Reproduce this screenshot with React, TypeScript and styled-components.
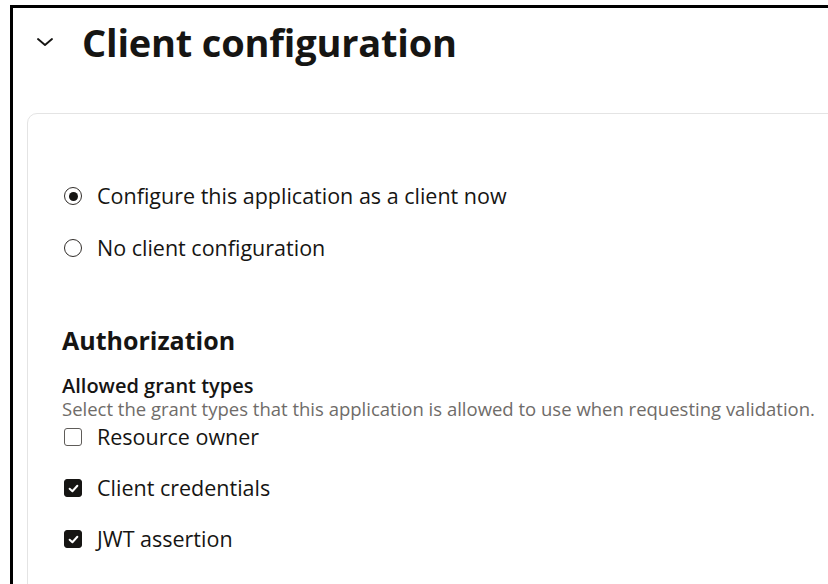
import styled, { createGlobalStyle } from "styled-components";

const GlobalStyle = createGlobalStyle`
  html, body {
    margin: 0;
    padding: 0;
    background: #ffffff;
    font-family: "Open Sans", "Noto Sans", Arial, sans-serif;
    color: #161513;
  }
`;

const Page = styled.div`
  width: 828px;
  height: 584px;
  overflow: hidden;
  padding: 5px 0 0 10px;
  box-sizing: border-box;
`;

const Frame = styled.section`
  border-top: 3px solid #000000;
  border-left: 3px solid #000000;
  width: 900px;
  height: 700px;
  box-sizing: border-box;
`;

const Header = styled.div`
  display: flex;
  align-items: center;
  height: 67px;
  padding-left: 23px;
  gap: 28px;
`;

const Chevron = styled.svg`
  width: 18px;
  height: 18px;
  flex: none;
`;

const Title = styled.h2`
  margin: 0;
  font-size: 38px;
  line-height: 50px;
  font-weight: 700;
  color: #161513;
  letter-spacing: -0.2px;
`;

const Card = styled.div`
  margin: 38px 0 0 14px;
  border: 1px solid #e4e4e4;
  border-radius: 10px;
  padding: 68px 0 0 34px;
  height: 600px;
`;

const OptionList = styled.div`
  display: flex;
  flex-direction: column;
  gap: 24px;
`;

const Option = styled.label`
  display: flex;
  align-items: center;
  gap: 15px;
  padding-left: 2px;
  font-size: 21.5px;
  line-height: 28px;
  color: #161513;
`;

const RadioMark = styled.span<{ $checked?: boolean }>`
  width: 18px;
  height: 18px;
  border: 1.8px solid #312d2a;
  border-radius: 50%;
  box-sizing: border-box;
  display: flex;
  align-items: center;
  justify-content: center;
  flex: none;

  &::after {
    content: "";
    width: 9px;
    height: 9px;
    border-radius: 50%;
    background: ${({ $checked }) => ($checked ? "#161513" : "transparent")};
  }
`;

const CheckMark = styled.span<{ $checked?: boolean }>`
  width: 18px;
  height: 18px;
  border-radius: 3px;
  box-sizing: border-box;
  border: 1.8px solid ${({ $checked }) => ($checked ? "#161513" : "#5f5c59")};
  background: ${({ $checked }) => ($checked ? "#161513" : "#ffffff")};
  display: flex;
  align-items: center;
  justify-content: center;
  flex: none;

  svg {
    width: 11px;
    height: 11px;
  }
`;

const SectionTitle = styled.h3`
  margin: 62px 0 0;
  font-size: 25px;
  font-weight: 700;
  line-height: 32px;
`;

const FieldLabel = styled.div`
  margin-top: 18px;
  font-size: 20px;
  font-weight: 600;
  line-height: 24px;
`;

const Hint = styled.div`
  font-size: 18.5px;
  line-height: 22px;
  color: #6f6c69;
  white-space: nowrap;
`;

const CheckList = styled.div`
  display: flex;
  flex-direction: column;
  gap: 23px;
  margin-top: 3px;
`;

const Radio = ({ label, checked }: { label: string; checked?: boolean }) => (
  <Option>
    <RadioMark $checked={checked} />
    {label}
  </Option>
);

const Checkbox = ({ label, checked }: { label: string; checked?: boolean }) => (
  <Option>
    <CheckMark $checked={checked}>
      {checked && (
        <svg viewBox="0 0 10 10">
          <path d="M1.5 5.2 L4 7.5 L8.5 2.5" fill="none" stroke="#ffffff" strokeWidth="1.8" strokeLinecap="round" strokeLinejoin="round" />
        </svg>
      )}
    </CheckMark>
    {label}
  </Option>
);

export default function App() {
  return (
    <>
      <GlobalStyle />
      <Page>
        <Frame>
          <Header>
            <Chevron viewBox="0 0 18 18">
              <path d="M2 6 L9 12 L16 6" fill="none" stroke="#161513" strokeWidth="1.9" strokeLinecap="round" strokeLinejoin="round" />
            </Chevron>
            <Title>Client configuration</Title>
          </Header>
          <Card>
            <OptionList>
              <Radio label="Configure this application as a client now" checked />
              <Radio label="No client configuration" />
            </OptionList>
            <SectionTitle>Authorization</SectionTitle>
            <FieldLabel>Allowed grant types</FieldLabel>
            <Hint>Select the grant types that this application is allowed to use when requesting validation.</Hint>
            <CheckList>
              <Checkbox label="Resource owner" />
              <Checkbox label="Client credentials" checked />
              <Checkbox label="JWT assertion" checked />
            </CheckList>
          </Card>
        </Frame>
      </Page>
    </>
  );
}
